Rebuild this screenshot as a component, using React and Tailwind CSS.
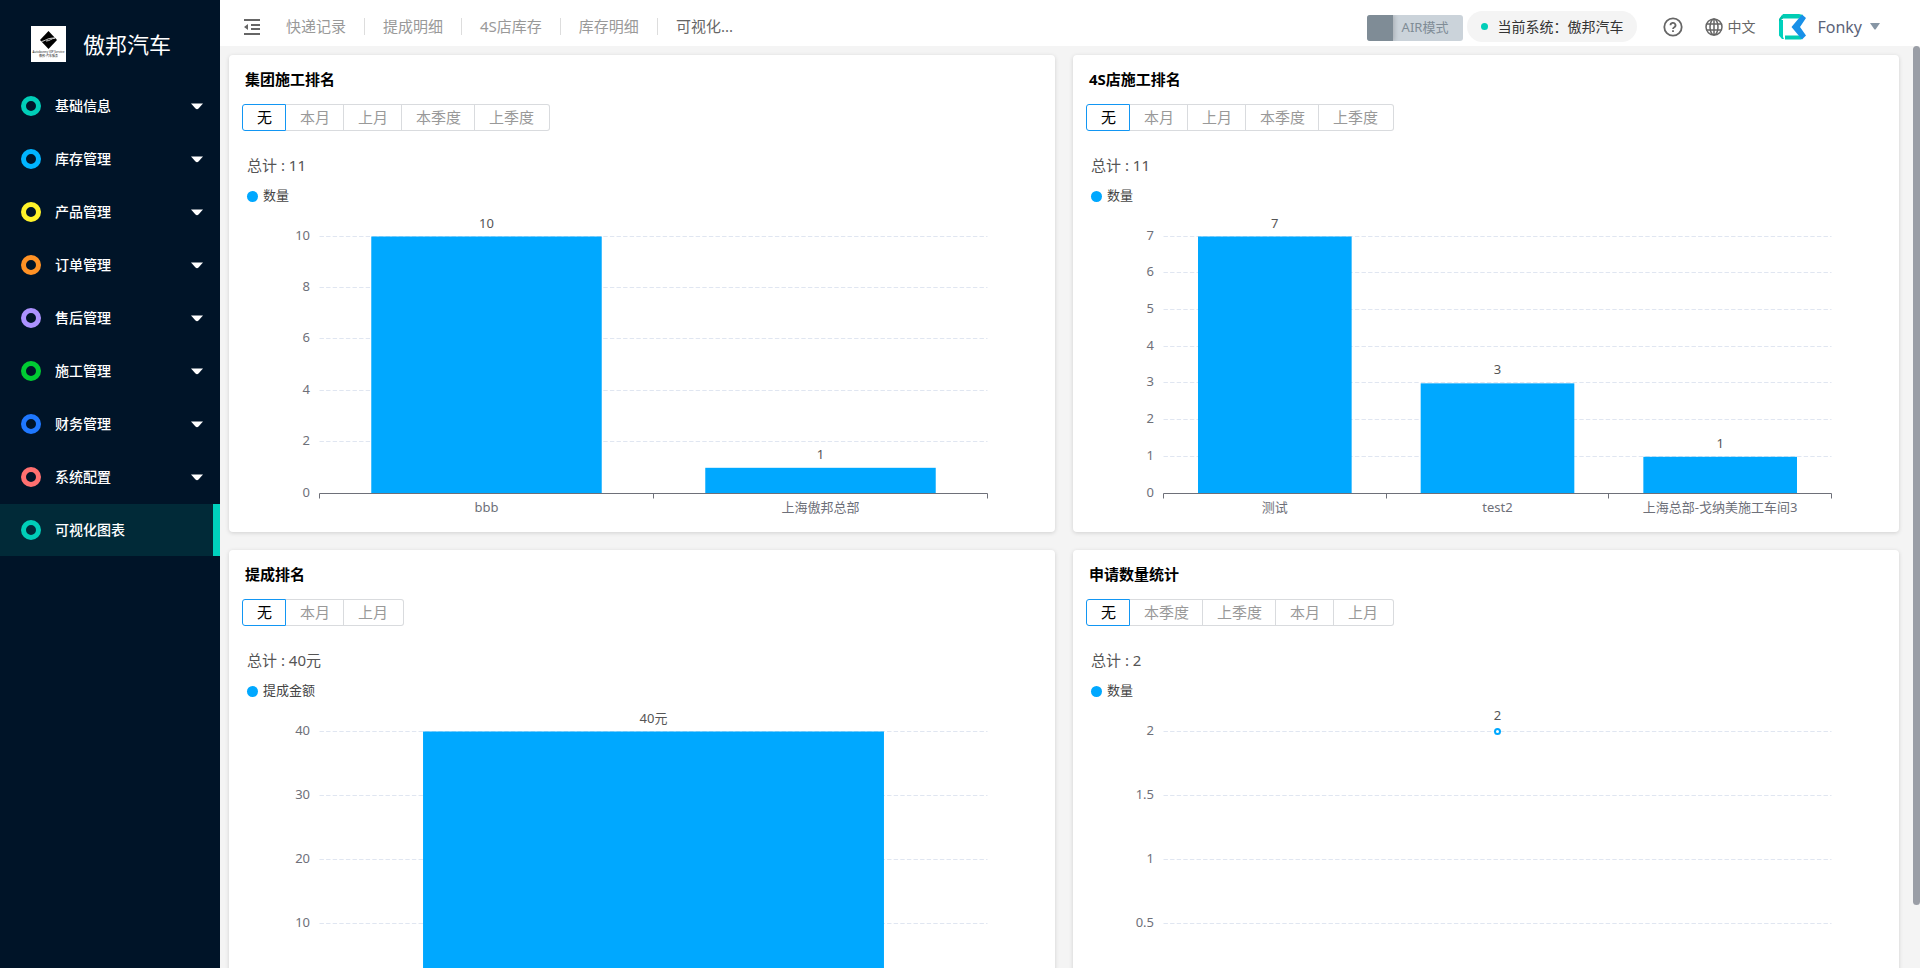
import React, { useState } from 'react';

const menus = [
  { name: '基础信息', ring: 'border-[#00ceb8]' },
  { name: '库存管理', ring: 'border-[#00b4ff]' },
  { name: '产品管理', ring: 'border-[#fff32a]' },
  { name: '订单管理', ring: 'border-[#ff9225]' },
  { name: '售后管理', ring: 'border-[#ac92ff]' },
  { name: '施工管理', ring: 'border-[#00cc33]' },
  { name: '财务管理', ring: 'border-[#1f78ff]' },
  { name: '系统配置', ring: 'border-[#ff7070]' },
  { name: '可视化图表', ring: 'border-[#00ceb8]', active: true },
];

const pages = ['快递记录', '提成明细', '4S店库存', '库存明细', '可视化...'];

const charts = [
  {
    title: '集团施工排名',
    ranges: ['无', '本月', '上月', '本季度', '上季度'],
    total: '11',
    legend: '数量',
    type: 'bar',
    max: 10,
    ticks: [0, 2, 4, 6, 8, 10],
    data: [
      { name: 'bbb', value: 10, label: '10' },
      { name: '上海傲邦总部', value: 1, label: '1' },
    ],
  },
  {
    title: '4S店施工排名',
    ranges: ['无', '本月', '上月', '本季度', '上季度'],
    total: '11',
    legend: '数量',
    type: 'bar',
    max: 7,
    ticks: [0, 1, 2, 3, 4, 5, 6, 7],
    data: [
      { name: '测试', value: 7, label: '7' },
      { name: 'test2', value: 3, label: '3' },
      { name: '上海总部-戈纳美施工车间3', value: 1, label: '1' },
    ],
  },
  {
    title: '提成排名',
    ranges: ['无', '本月', '上月'],
    total: '40元',
    legend: '提成金额',
    type: 'bar',
    max: 40,
    ticks: [0, 10, 20, 30, 40],
    data: [{ name: 'Fonky', value: 40, label: '40元' }],
  },
  {
    title: '申请数量统计',
    ranges: ['无', '本季度', '上季度', '本月', '上月'],
    total: '2',
    legend: '数量',
    type: 'line',
    max: 2,
    ticks: [0, 0.5, 1, 1.5, 2],
    data: [{ name: '测试', value: 2, label: '2' }],
  },
];

// plot area inside the chart's viewBox
const LEFT = 90.5;
const RIGHT = 758.5;
const TOP = 31.5;
const BOTTOM = 288.5;

function Chart({ type, max, ticks, data }) {
  const yOf = (v) => BOTTOM - (v / max) * (BOTTOM - TOP);
  const step = (RIGHT - LEFT) / data.length;
  const barWidth = step * 0.69;

  return (
    <svg viewBox="0 0 826 327" className="block w-full text-[13px]">
      {ticks.map((t) => (
        <g key={t}>
          {t > 0 && (
            <line x1={LEFT} x2={RIGHT} y1={Math.round(yOf(t)) - 0.5} y2={Math.round(yOf(t)) - 0.5} stroke="#e0e6f1" strokeDasharray="4.4 2.2" />
          )}
          <text x="81" y={yOf(t) + 3} textAnchor="end" fill="#6e7079">{t}</text>
        </g>
      ))}
      {data.map((d, i) => {
        const center = LEFT + step * (i + 0.5);
        return (
          <g key={d.name}>
            {type === 'bar' ? (
              <rect x={center - barWidth / 2} y={yOf(d.value)} width={barWidth} height={BOTTOM - yOf(d.value)} fill="#00a8ff" />
            ) : (
              <circle cx={center} cy={yOf(d.value)} r="2.5" fill="#fff" stroke="#00a8ff" strokeWidth="2" />
            )}
            <text x={center} y={yOf(d.value) - (type === 'bar' ? 9 : 12)} textAnchor="middle" fill="#555">{d.label}</text>
            <text x={center} y={BOTTOM + 18} textAnchor="middle" fill="#6e7079">{d.name}</text>
            <line x1={Math.floor(LEFT + step * (i + 1)) + 0.5} x2={Math.floor(LEFT + step * (i + 1)) + 0.5} y1={BOTTOM} y2={BOTTOM + 5} stroke="#6e7079" />
          </g>
        );
      })}
      <path d={`M${LEFT} ${BOTTOM + 5}V${BOTTOM}H${RIGHT}`} fill="none" stroke="#6e7079" />
    </svg>
  );
}

function ChartCard({ chart }) {
  const [range, setRange] = useState('无');

  return (
    <section className="bg-white rounded-sm shadow-[0_1px_4px_rgba(0,0,0,0.15)] overflow-hidden">
      <h2 className="px-4 pt-3 text-[15px] leading-6 font-bold text-black">{chart.title}</h2>
      <div className="flex mt-[13px] ml-[13px]">
        {chart.ranges.map((r) => (
          <button
            key={r}
            type="button"
            onClick={() => setRange(r)}
            className={`h-[27px] pl-[14px] pr-[13px] last:pr-[15px] text-[15px] leading-[25px] border-y border-r first:border-l first:rounded-l-[3px] last:rounded-r-[3px] ${
              r === range ? 'border-[#1296f3] text-black' : 'border-[#d9dbde] text-[#999]'
            }`}
          >
            {r}
          </button>
        ))}
      </div>
      <p className="mt-[22px] ml-[18px] text-[15px] leading-6 text-[#555]">总计 : {chart.total}</p>
      <p className="flex items-center gap-[5px] mt-2 ml-[18px] text-[13px] leading-5 text-[#444]">
        <span className="size-[11px] mt-[3px] rounded-full bg-[#00a8ff]" />
        {chart.legend}
      </p>
      <Chart {...chart} />
    </section>
  );
}

function Sidebar() {
  return (
    <aside className="w-[220px] shrink-0 bg-[#001428] text-white">
      <div className="flex items-center h-20 pl-[31px] pt-2">
        <svg viewBox="0 0 35 36" className="w-[35px] h-9">
          <rect width="35" height="36" fill="#fff" />
          <path d="M17.500 5 26 14l-8.500 9L9 14z" fill="#000" />
          <path d="M10.500 15.500c4-.5 5-3.500 13.500-3.500-4 .5-5 3-9 3" fill="none" stroke="#ddd" strokeWidth="1" />
          <text x="17.5" y="26.5" fontSize="3" textAnchor="middle" fill="#222">Autobonny VIP Service</text>
          <text x="17.5" y="30.5" fontSize="3" textAnchor="middle" fill="#222">傲邦·汽车服务</text>
        </svg>
        <h1 className="ml-[17px] text-[22px] leading-8">傲邦汽车</h1>
      </div>
      <nav className="flex flex-col gap-px">
        {menus.map((m) => (
          <a
            key={m.name}
            href="#"
            className={`flex items-center h-[52px] pl-[21px] text-sm font-medium ${
              m.active ? 'bg-[#012a38] border-r-[7px] border-[#00d1bd]' : 'pr-[17px]'
            }`}
          >
            <span className={`size-5 mr-[14px] rounded-full border-[5px] ${m.ring}`} />
            {m.name}
            {!m.active && (
              <svg viewBox="0 0 12 7" className="w-3 h-[7px] ml-auto fill-white">
                <path d="M0 .5h12L7.500 5.500Q6 7 4.500 5.500z" />
              </svg>
            )}
          </a>
        ))}
      </nav>
    </aside>
  );
}

function Header() {
  return (
    <header className="flex items-center justify-between h-[46px] pl-6 pr-10 pt-[7px] bg-white">
      <div className="flex items-center">
        <button type="button" aria-label="收起菜单">
          <svg viewBox="0 0 16 16" className="size-4 fill-[#666]">
            <path d="M0 0h16v2H0zM7 5h9v2H7zM7 9h9v2H7zM0 14h16v2H0zM4 5v6L0 8z" />
          </svg>
        </button>
        <nav className="flex items-center ml-2 text-[15px] divide-x divide-[#ddd]">
          {pages.map((p, i) => (
            <a key={p} href="#" className={`px-[18px] leading-[17px] ${i === pages.length - 1 ? 'text-[#666]' : 'text-[#999]'}`}>
              {p}
            </a>
          ))}
        </nav>
      </div>
      <div className="flex items-center">
        <button type="button" className="flex items-center h-[26px] mt-[3px] pr-[15px] rounded-[3px] bg-[#cbd3da] text-[13px] text-[#7f8c96] overflow-hidden">
          <span className="w-[26px] h-full mr-[9px] bg-[#7f8c96] shadow-[2px_0_4px_rgba(0,0,0,0.15)]" />
          AIR模式
        </button>
        <div className="flex items-center h-[31px] ml-1 px-[14px] rounded-full bg-[#f4f4f4] text-sm text-[#333]">
          <span className="size-[7px] mr-[9px] rounded-full bg-[#00ceb8]" />
          当前系统：傲邦汽车
        </div>
        <button type="button" aria-label="帮助" className="ml-[26px]">
          <svg viewBox="0 0 20 20" className="size-5" fill="none" stroke="#666" strokeWidth="1.8">
            <circle cx="10" cy="10" r="8.7" />
            <path d="M7.500 8.300a2.500 2.300 0 1 1 3.800 1.900C10.400 10.700 10 11 10 12" />
            <path d="M10 13.200v1.800" />
          </svg>
        </button>
        <button type="button" className="flex items-center ml-[22px] gap-1 text-sm text-[#666]">
          <svg viewBox="0 0 18 18" className="size-[18px]" fill="none" stroke="#666" strokeWidth="1.5">
            <circle cx="9" cy="9" r="8" />
            <ellipse cx="9" cy="9" rx="4" ry="8" />
            <path d="M9 1v16M1.700 6h14.600M1.700 12h14.600" />
          </svg>
          中文
        </button>
        <button type="button" className="flex items-center ml-6 text-base text-[#5c6479]">
          <svg viewBox="0 0 27 26" className="w-[27px] h-[26px] mr-[11px]">
            <path d="M4 0h16l4 1-4 3.500H1z" fill="#00cdb4" />
            <path d="M0 6h4v17l1 2H3L0 21.500z" fill="#00d1bd" />
            <path d="M6 21.500h14.500l3 3L22 25.500H6z" fill="#00cdb4" />
            <path d="M4 4.500 0 7.500V5l3-4z" fill="#00bfa8" />
            <path d="M23 .5 27 4l-6 9 6 8.500-4 4L12.500 13z" fill="#1890e8" />
          </svg>
          Fonky
          <svg viewBox="0 0 10 7" className="w-[10px] h-[7px] ml-2 fill-[#8796a5]">
            <path d="M0 0h10L5.500 6.500h-1z" />
          </svg>
        </button>
      </div>
    </header>
  );
}

function App() {
  return (
    <div className="flex h-screen overflow-hidden bg-[#f4f4f4] font-['Noto_Sans','Noto_Sans_CJK_SC',sans-serif]">
      <Sidebar />
      <div className="relative flex flex-col flex-1 min-w-0">
        <Header />
        <main className="flex-1 min-h-0 overflow-y-auto [scrollbar-width:none] pt-[9px] pb-[14px] pl-[9px] pr-[21px]">
          <div className="grid grid-cols-2 gap-[18px]">
            {charts.map((c) => (
              <ChartCard key={c.title} chart={c} />
            ))}
          </div>
        </main>
        {/* scroll thumb */}
        <div className="absolute right-0 top-[46px] bottom-[63px] w-[7px] rounded-full bg-[#9a9ea6]" />
      </div>
    </div>
  );
}

export default App;
